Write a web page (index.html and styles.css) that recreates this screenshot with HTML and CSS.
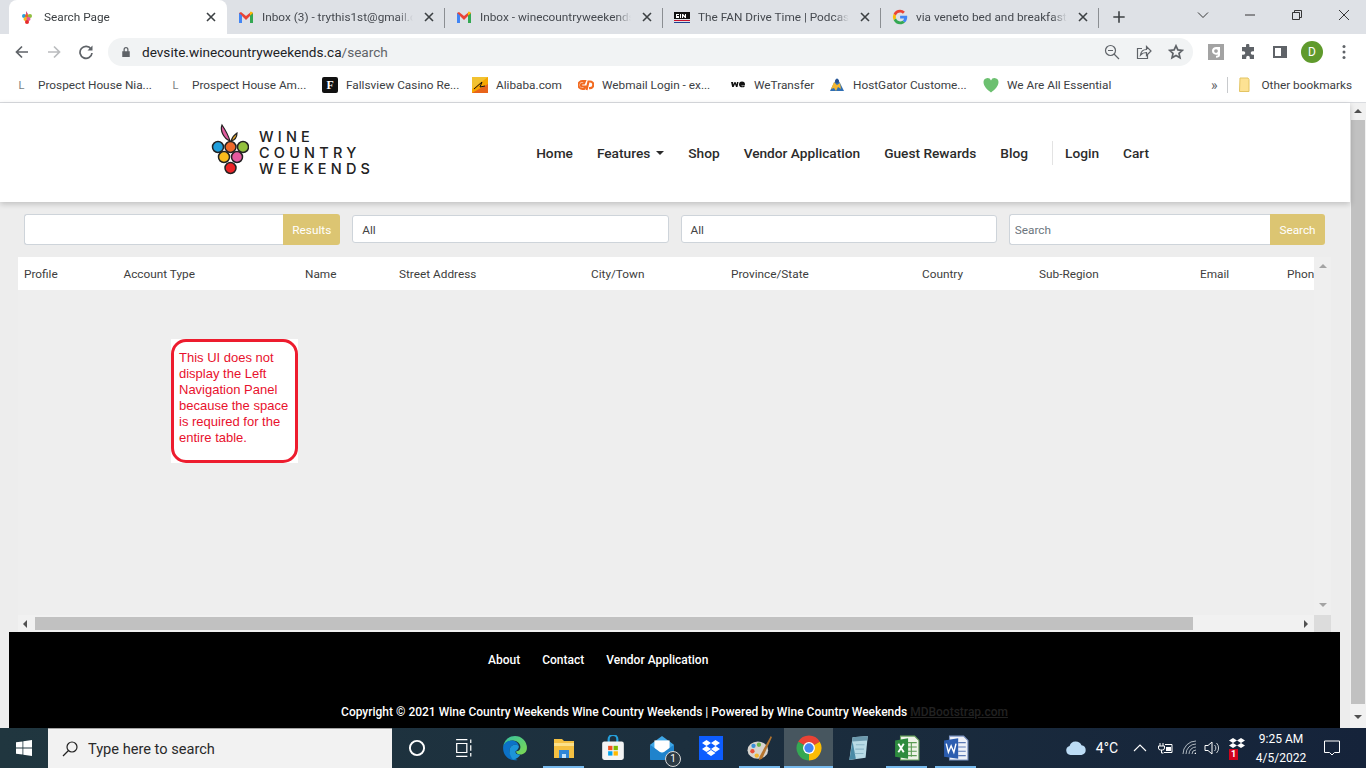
FILE: index.html
```html
<!DOCTYPE html>
<html lang="en">
<head>
<meta charset="utf-8">
<title>Search Page</title>
<link rel="stylesheet" href="styles.css">
</head>
<body>
<div class="screen">
  <div class="tabstrip">
    <div class="tab active">
      <svg class="fav" viewBox="0 0 16 16"><path d="M7 2l2 3-2 1z" fill="#d6457f"/><circle cx="5" cy="7" r="2" fill="#2b9fd8"/><circle cx="8" cy="7" r="2" fill="#e8622c"/><circle cx="11" cy="7" r="2" fill="#8fbf3f"/><circle cx="6.500" cy="10" r="2" fill="#f5b81f"/><circle cx="9.500" cy="10" r="2" fill="#e0569b"/><circle cx="8" cy="13" r="2" fill="#e62b2b"/></svg>
      <span class="tab-title">Search Page</span>
      <svg class="close" viewBox="0 0 16 16"><path d="M4 4l8 8M12 4l-8 8"/></svg>
    </div>
    <div class="tab">
      <svg class="fav" viewBox="0 0 16 16"><path d="M1 14V4l2-1 5 4 5-4 2 1v10h-3V7L8 11 4 7v7z" fill="#ea4335"/><path d="M1 14V4l3 2.500V14z" fill="#4285f4"/><path d="M12 14V6.500L15 4v10z" fill="#34a853"/><path d="M12 6.500V3l1-.5 2 1.500-3 2.500z" fill="#fbbc04"/></svg>
      <span class="tab-title">Inbox (3) - trythis1st@gmail.com</span>
      <svg class="close" viewBox="0 0 16 16"><path d="M4 4l8 8M12 4l-8 8"/></svg>
    </div>
    <div class="tab">
      <svg class="fav" viewBox="0 0 16 16"><path d="M1 14V4l2-1 5 4 5-4 2 1v10h-3V7L8 11 4 7v7z" fill="#ea4335"/><path d="M1 14V4l3 2.500V14z" fill="#4285f4"/><path d="M12 14V6.500L15 4v10z" fill="#34a853"/><path d="M12 6.500V3l1-.5 2 1.500-3 2.500z" fill="#fbbc04"/></svg>
      <span class="tab-title">Inbox - winecountryweekends</span>
      <svg class="close" viewBox="0 0 16 16"><path d="M4 4l8 8M12 4l-8 8"/></svg>
    </div>
    <div class="tab">
      <svg class="fav" viewBox="0 0 16 16"><rect x="0" y="3" width="16" height="7" fill="#111"/><path d="M0 11h16v1H0z" fill="#c8102e"/><path d="M0 13h16v1H0z" fill="#1d3f8f"/><path d="M2 5h3v1H3v1h2v2H2M6 5h1v4H6zM8 5h1l2 2V5h1v4h-1L9 7v2H8z" fill="#fff"/></svg>
      <span class="tab-title">The FAN Drive Time | Podcasts</span>
      <svg class="close" viewBox="0 0 16 16"><path d="M4 4l8 8M12 4l-8 8"/></svg>
    </div>
    <div class="tab">
      <svg class="fav" viewBox="0 0 16 16"><path d="M15.200 8.200c0-.6 0-1-.1-1.500H8.100v2.800h4a3.400 3.400 0 0 1-1.500 2.200l2.300 1.800c1.400-1.300 2.300-3.200 2.300-5.300z" fill="#4285f4"/><path d="M8.100 15.300c2 0 3.600-.6 4.800-1.800l-2.300-1.800c-.6.400-1.500.7-2.500.7-1.900 0-3.600-1.300-4.100-3.100L1.600 11.100a7.200 7.200 0 0 0 6.500 4.200z" fill="#34a853"/><path d="M4 9.300a4.300 4.300 0 0 1 0-2.700L1.600 4.800a7.200 7.200 0 0 0 0 6.300z" fill="#fbbc04"/><path d="M8.100 3.600c1.100 0 2 .4 2.800 1.100l2-2A7 7 0 0 0 8.100.8a7.200 7.200 0 0 0-6.500 4l2.400 1.800c.5-1.700 2.200-3 4.100-3z" fill="#ea4335"/></svg>
      <span class="tab-title">via veneto bed and breakfast</span>
      <svg class="close" viewBox="0 0 16 16"><path d="M4 4l8 8M12 4l-8 8"/></svg>
    </div>
    <svg class="newtab" viewBox="0 0 16 16"><path d="M8 1.500v13M1.500 8h13"/></svg>
    <div class="winctl">
      <svg viewBox="0 0 12 12"><path d="M1 3.500l5 5 5-5"/></svg>
      <svg viewBox="0 0 12 12"><path d="M1 6h10"/></svg>
      <svg viewBox="0 0 12 12"><path d="M1.500 3.500h7v7h-7zM3.500 3.500v-2h7v7h-2"/></svg>
      <svg viewBox="0 0 12 12"><path d="M1 1l10 10M11 1L1 11"/></svg>
    </div>
  </div>

  <div class="toolbar">
    <svg class="tool" viewBox="0 0 16 16"><path class="ink" d="M14 8H2.500M8 2.500L2.500 8 8 13.500"/></svg>
    <svg class="tool" viewBox="0 0 16 16"><path class="ink off" d="M2 8h11.500M8 2.500L13.500 8 8 13.500"/></svg>
    <svg class="tool" viewBox="0 0 16 16"><path class="ink" d="M13 5a6 6 0 1 0 1 4"/><path class="solid" d="M14.500 1.500v5h-5z"/></svg>
    <div class="omnibox">
      <svg class="lock" viewBox="0 0 12 14"><path d="M3 6V4a3 3 0 0 1 6 0v2h1.500v7h-9V6zm1.500 0h3V4a1.500 1.500 0 0 0-3 0z"/></svg>
      <span class="url">devsite.winecountryweekends.ca<span class="url-path">/search</span></span>
      <svg class="omni-icon" viewBox="0 0 16 16"><circle class="thin" cx="6.500" cy="6.500" r="5"/><path class="thin" d="M10 10l5 5M4 6.500h5"/></svg>
      <svg class="omni-icon" viewBox="0 0 16 16"><path class="thin" d="M6 4.500H1.500v10h10V11"/><path class="thin" d="M4.500 11c.5-3.500 3-5.500 6-5.500V2.500L15 7l-4.500 4.500V8.500c-2.500 0-4.500.8-6 2.500z"/></svg>
      <svg class="omni-icon" viewBox="0 0 16 16"><path class="thick" d="M8 1.800l1.900 4.100 4.500.5-3.400 3 1 4.400L8 11.500l-4 2.300 1-4.400-3.400-3 4.500-.5z"/></svg>
    </div>
    <div class="ext-group">
      <svg class="ext" viewBox="0 0 18 18"><rect width="18" height="18" fill="#a3a3a3"/><path d="M13.500 3.500v9c0 2-1.500 3-4.500 3v-2c1 0 2-.3 2-1v-.8c-3.500 1-6.500-.5-6.500-4 0-3.500 3-5 6.500-4.200h2.500zM9 5.800c-1.500 0-2 .8-2 2s.5 2 2 2 2-.8 2-2-.5-2-2-2z" fill="#fff"/></svg>
      <svg class="ext" viewBox="0 0 16 16"><path d="M6 1.500a1.700 1.700 0 0 1 3.400 0V3H14v4.200h-1.500a1.800 1.800 0 0 0 0 3.600H14V15H9.800v-1.500a1.800 1.800 0 0 0-3.600 0V15H2v-4.200h1.500a1.800 1.800 0 0 0 0-3.600H2V3h4z" fill="#5f6368"/></svg>
      <svg class="ext" viewBox="0 0 16 16"><path d="M1 2h14v12H1zm2 2v8h6V4z" fill="#5f6368"/></svg>
      <span class="avatar">D</span>
      <svg class="ext" viewBox="0 0 16 16"><circle cx="8" cy="2.500" r="1.500" fill="#5f6368"/><circle cx="8" cy="8" r="1.500" fill="#5f6368"/><circle cx="8" cy="13.500" r="1.500" fill="#5f6368"/></svg>
    </div>
  </div>

  <div class="bookmarks">
    <div class="bm"><span class="bm-l">L</span><span>Prospect House Nia...</span></div>
    <div class="bm"><span class="bm-l">L</span><span>Prospect House Am...</span></div>
    <div class="bm"><span class="bm-f">F</span><span>Fallsview Casino Re...</span></div>
    <div class="bm"><svg class="bm-ico" viewBox="0 0 16 16"><rect width="16" height="16" fill="#f7a600"/><path d="M0 0h16L0 12z" fill="#f2c230"/><path d="M0 16l16-9v9z" fill="#e8641b"/><path d="M2 12l8-7-2 5 5-1" fill="none" stroke="#111"/></svg><span>Alibaba.com</span></div>
    <div class="bm"><svg class="bm-ico" viewBox="0 0 16 16"><path d="M7 4H4.500a4 4 0 0 0 0 8H6l1.500-2.500H4.500a1.500 1.500 0 0 1 0-3H6zM8.500 13l2-8.500H12a3.300 3.300 0 0 1 0 6.700h-1" fill="none" stroke="#f26b21" stroke-width="2.200"/></svg><span>Webmail Login - ex...</span></div>
    <div class="bm"><svg class="bm-ico" viewBox="0 0 16 16"><path d="M1 5l1.200 5h1.500L5 7l1 3h1.500l1-5H7L6.500 7.500 5.500 5h-1l-1 2.500L3 5z" fill="#111"/><path d="M9 7.500a3 3 0 0 1 6 0l-.3 1h-3.500c.5 1 2 .8 3 .2l.5 1c-2 1.200-5.700.8-5.700-2.200z" fill="#111"/></svg><span>WeTransfer</span></div>
    <div class="bm"><svg class="bm-ico" viewBox="0 0 16 16"><path d="M8 1l3 5 4 8H1l4-8z" fill="#2f6fb5"/><path d="M5 5l3 3 3-2 1 6-3-2-2 4-2-3-3 1z" fill="#f2b632"/><circle cx="8" cy="4" r="2" fill="#264f8c"/></svg><span>HostGator Custome...</span></div>
    <div class="bm"><svg class="bm-ico" viewBox="0 0 16 16"><path d="M8 15.500C4 12.500.5 9 .5 5A3.900 3.900 0 0 1 8 3.500 3.900 3.900 0 0 1 15.500 5c0 4-3.500 7.500-7.500 10.500z" fill="#6cc070"/></svg><span>We Are All Essential</span></div>
    <div class="bm-end">
      <span class="chev">»</span>
      <span class="bm-sep"></span>
      <svg class="bm-folder" viewBox="0 0 16 16"><path d="M1.500 1h8l1 1.500v12h-9.500z" fill="#fde293" stroke="#e3c463" transform="translate(1.500)"/></svg>
      <span>Other bookmarks</span>
    </div>
  </div>

  <div class="viewport">
    <div class="page">
      <header class="site-header">
        <a class="logo">
          <svg class="logo-mark" viewBox="0 0 38 54">
            <path d="M19 18C17 11 13 5 11 2c-2 5 1 13 8 16z" fill="#df5c9e" stroke="#222" stroke-width="1.200"/>
            <path d="M20 18c1-3 3-6 6-8 0 4-2 7-6 8z" fill="#e5a92c" stroke="#222" stroke-width="1.200"/>
            <g stroke="#222" stroke-width="1.500">
              <circle cx="7" cy="24" r="5.500" fill="#1f9fdc"/>
              <circle cx="32" cy="24" r="5.500" fill="#93c13e"/>
              <circle cx="19.500" cy="24" r="5.500" fill="#ee6a2b"/>
              <circle cx="13" cy="34" r="5.500" fill="#f9bb1c"/>
              <circle cx="26" cy="34" r="5.500" fill="#e55a9f"/>
              <circle cx="19.500" cy="45" r="5.500" fill="#ec2427"/>
            </g>
          </svg>
          <span class="logo-text"><span>WINE</span><span>COUNTRY</span><span>WEEKENDS</span></span>
        </a>
        <nav class="site-nav">
          <a>Home</a>
          <a class="has-caret">Features<span class="caret"></span></a>
          <a>Shop</a>
          <a>Vendor Application</a>
          <a>Guest Rewards</a>
          <a>Blog</a>
          <span class="nav-sep"></span>
          <a>Login</a>
          <a>Cart</a>
        </nav>
      </header>

      <main class="content">
        <div class="filters">
          <div class="input-group"><input class="field" type="text" aria-label="Results"><button class="gold-btn wide">Results</button></div>
          <div class="select">All</div>
          <div class="select">All</div>
          <div class="input-group"><input class="field" type="text" placeholder="Search"><button class="gold-btn">Search</button></div>
        </div>

        <div class="table-frame">
          <div class="table-clip">
            <table class="results">
              <thead>
                <tr>
                  <th class="c1">Profile</th><th class="c2">Account Type</th><th class="c3">Name</th><th class="c4">Street Address</th><th class="c5">City/Town</th><th class="c6">Province/State</th><th class="c7">Country</th><th class="c8">Sub-Region</th><th class="c9">Email</th><th class="c10">Phone</th>
                </tr>
              </thead>
            </table>
          </div>
          <div class="vscroll">
            <span class="arrow up"></span>
            <span class="arrow down"></span>
          </div>
          <div class="hscroll">
            <span class="arrow left"></span>
            <span class="hthumb"></span>
            <span class="arrow right"></span>
          </div>
          <div class="corner"></div>
        </div>

        <div class="callout">
          <div class="callout-in">This UI does not display the Left Navigation Panel because the space is required for the entire table.</div>
        </div>
      </main>

      <footer class="site-footer">
        <div class="foot-links"><a>About</a><a>Contact</a><a>Vendor Application</a></div>
        <div class="copyright">Copyright © 2021 Wine Country Weekends Wine Country Weekends | Powered by Wine Country Weekends <a class="mdb">MDBootstrap.com</a></div>
      </footer>
    </div>
    <div class="page-scroll">
      <span class="arrow up dark"></span>
      <span class="vthumb"></span>
      <span class="arrow down dark"></span>
    </div>
  </div>

  <div class="taskbar">
    <div class="tb-start"><svg viewBox="0 0 16 16"><path d="M0 2.300l6.500-.9v6.200H0zM7.300 1.300L16 0v7.600H7.300zM0 8.400h6.500v6.200L0 13.700zM7.300 8.400H16V16l-8.700-1.200z" fill="#fff"/></svg></div>
    <div class="tb-search">
      <svg viewBox="0 0 16 16"><circle cx="10" cy="6" r="5" fill="none" stroke="#222" stroke-width="1.200"/><path d="M6.500 9.500L1 15" stroke="#222" stroke-width="1.300"/></svg>
      <span>Type here to search</span>
    </div>
    <div class="tb-app"><svg class="i18" viewBox="0 0 16 16"><circle cx="8" cy="8" r="6.300" fill="none" stroke="#fff" stroke-width="1.700"/></svg></div>
    <div class="tb-app"><svg class="i18 nudge" viewBox="0 0 16 16"><path d="M1 .5h10M1 15.500h10M1.500 4h9v8h-9zM14 .5v3M14 5.500v5M14 12.500v3" fill="none" stroke="#fff" stroke-width="1.100"/></svg></div>
    <div class="tb-app"><svg class="i26" viewBox="0 0 24 24"><defs><linearGradient id="edgeg" x1="0" y1="0" x2="1" y2="1"><stop offset="0" stop-color="#35c1a2"/><stop offset="1" stop-color="#7fd84f"/></linearGradient></defs><path d="M12 1a11 11 0 0 1 11 11c0 4-3 6-6 6-3 0-4-1.500-4-3 2 0 4-1 4-4 0-3-3-6-7-6-4 0-8 2.500-9 6C2 5 6 1 12 1z" fill="url(#edgeg)"/><path d="M1 12c0-4 4-7 8-7 3 0 6 2 6.500 5-3-2-8-1-8.500 4-.4 4 3 8 7.500 9C8 24.500 1 20 1 12z" fill="#0c72c7"/><path d="M7 14c.5-5 5.500-6 8.500-4 .5 2-1 4-3 5-.5 2 2 3.500 4.500 3-1.500 3-5 5-7 4.500C9 21 6.500 18 7 14z" fill="#1d94d8"/></svg></div>
    <div class="tb-app on"><svg class="i24" viewBox="0 0 24 24"><path d="M2 3h8l2 2h10v17H2z" fill="#f4c042"/><path d="M2 7h20v3H2z" fill="#fbe08a"/><path d="M7 14h10v8H7z" fill="#2f86d6"/><path d="M10 18h4v4h-4z" fill="#bfe1fa"/></svg></div>
    <div class="tb-app"><svg class="i26" viewBox="0 0 24 24"><path d="M8 7V4a4 4 0 0 1 8 0v3" fill="none" stroke="#25a0dc" stroke-width="2"/><rect x="2" y="6" width="20" height="17" rx="2" fill="#f4f4f4"/><rect x="7.500" y="10" width="4" height="4" fill="#f25022"/><rect x="12.500" y="10" width="4" height="4" fill="#7fba00"/><rect x="7.500" y="15" width="4" height="4" fill="#00a4ef"/><rect x="12.500" y="15" width="4" height="4" fill="#ffb900"/></svg></div>
    <div class="tb-app badge-host">
      <svg class="i26" viewBox="0 0 24 24"><path d="M1 9l11-8 11 8v13H1z" fill="#3fa7e6"/><path d="M5 5h14v11H5z" fill="#fff"/><path d="M1 9l11 8 11-8v14H1z" fill="#1f83cc"/></svg>
      <span class="count">1</span>
    </div>
    <div class="tb-app"><svg class="i24" viewBox="0 0 24 24"><rect width="24" height="24" fill="#0d5dff"/><path d="M7.500 4L12 7l-4.500 3L3 7zM16.500 4L21 7l-4.500 3L12 7zM7.500 10L12 13l-4.500 3L3 13zM16.500 10L21 13l-4.500 3L12 13zM7.500 17L12 14l4.500 3L12 20z" fill="#fff"/></svg></div>
    <div class="tb-app on"><svg class="i26" viewBox="0 0 24 24"><ellipse cx="10" cy="14" rx="9.500" ry="8" fill="#d8d5cf"/><circle cx="6" cy="10" r="2" fill="#3a8fd8"/><circle cx="11" cy="9" r="2" fill="#6cb64a"/><circle cx="5" cy="15" r="2" fill="#e8503a"/><circle cx="9" cy="19" r="2" fill="#f2b632"/><path d="M22 1l1 1-9 20-3 1 .5-3z" fill="#b5752f"/></svg></div>
    <div class="tb-app on lit"><svg class="i26" viewBox="0 0 24 24"><path d="M12 12L2.040 6.250A11.500 11.500 0 0 1 21.960 6.250z" fill="#ea4335"/><path d="M12 12L21.960 6.250A11.500 11.500 0 0 1 12 23.500z" fill="#fbbc04"/><path d="M12 12V23.500A11.500 11.500 0 0 1 2.040 6.250z" fill="#34a853"/><circle cx="12" cy="12" r="5.500" fill="#fff"/><circle cx="12" cy="12" r="4.300" fill="#4285f4"/></svg></div>
    <div class="tb-app"><svg class="i26" viewBox="0 0 24 24"><path d="M7 2l14-1-2 20-15 2z" fill="#b9dbe6"/><path d="M7 2l14-1-.5 4-14 1z" fill="#6c99ad"/><path d="M4 23L7 6l3 16z" fill="#4a8aa6"/><path d="M10 9h8M9.500 13h8M9 17h8" stroke="#8db8c8"/></svg></div>
    <div class="tb-app on"><svg class="i26" viewBox="0 0 24 24"><path d="M6 1h13l4 4v18H6z" fill="#eef3e8" stroke="#6aa35e"/><path d="M12 7h9M12 11h9M12 15h9M12 19h9M16 7v13" stroke="#5b9b53"/><path d="M1 5l12-2v19L1 20z" fill="#2d8b3e"/><path d="M4 8l5 8M9 8l-5 8" stroke="#fff" stroke-width="1.700"/></svg></div>
    <div class="tb-app on"><svg class="i26" viewBox="0 0 24 24"><path d="M6 1h13l4 4v18H6z" fill="#eef1f8" stroke="#7d95c4"/><path d="M14 7h7M14 11h7M14 15h7M14 19h7" stroke="#5d7ab5"/><path d="M1 5l13-2v19L1 20z" fill="#2b5db0"/><path d="M3 8l2 8 2.500-6L10 16l2-8" fill="none" stroke="#fff" stroke-width="1.300"/></svg></div>
    <div class="tb-fill"></div>
    <div class="tray">
      <svg class="cloud" viewBox="0 0 24 16"><path d="M6 15.500a5 5 0 0 1-1-9.800A7 7 0 0 1 18 5a5.300 5.300 0 0 1 0 10.500z" fill="#bcdcf5"/></svg>
      <span class="temp">4°C</span>
      <svg class="tray-i" viewBox="0 0 16 16"><path d="M2 11l6-6 6 6" fill="none" stroke="#fff" stroke-width="1.100"/></svg>
      <svg class="tray-i" viewBox="0 0 16 16"><path d="M3 3v3M6 3v3M1.500 6h6v2a2 2 0 0 1-2 2h-2a2 2 0 0 1-2-2zM4.500 10v3h2M8 4.500h7v8H7" fill="none" stroke="#fff"/><path d="M9 7h5v4H9z" fill="#fff"/></svg>
      <svg class="tray-i tight" viewBox="0 0 16 16"><path d="M1 14a13 13 0 0 1 13-13M4 14A10 10 0 0 1 14 4M7 14a7 7 0 0 1 7-7M10 14a4 4 0 0 1 4-4" fill="none" stroke="#aeb7bf"/><path d="M12.500 14a1.500 1.500 0 0 1 1.500-1.500V14z" fill="#fff"/></svg>
      <svg class="tray-i" viewBox="0 0 16 16"><path d="M1 5.500h3L8 2v12l-4-3.500H1z" fill="none" stroke="#fff"/><path d="M10.500 5a4 4 0 0 1 0 6M12.500 3a7 7 0 0 1 0 10" fill="none" stroke="#c9cfd4"/></svg>
      <span class="tray-db">
        <svg viewBox="0 0 16 12"><path d="M4 0l4 2.500L4 5 0 2.500zM12 0l4 2.500L12 5 8 2.500zM4 5l4 2.500L4 10 0 7.500zM12 5l4 2.500L12 10 8 7.500z" fill="#fff"/></svg>
        <span class="db-badge">1</span>
      </span>
      <div class="clock"><span>9:25 AM</span><span>4/5/2022</span></div>
      <svg class="notif" viewBox="0 0 16 16"><path d="M.5 1h15v11.500h-5L8 15l-2.500-2.500h-5z" fill="none" stroke="#fff"/></svg>
    </div>
  </div>
</div>
</body>
</html>
```

FILE: styles.css
```css
* { box-sizing: border-box; }
html, body { margin: 0; padding: 0; width: 1366px; height: 768px; overflow: hidden; }
body { font-family: Roboto, "Liberation Sans", sans-serif; font-size: 12px; color: #3c4043; }
.screen { width: 1366px; height: 768px; display: flex; flex-direction: column; background: #fff; }

/* tab strip */
.tabstrip { height: 34px; flex: none; background: #dee1e6; display: flex; align-items: stretch; padding-left: 9px; position: relative; }
.tab { width: 218px; height: 34px; display: flex; align-items: center; gap: 8px; padding: 0 8px 0 11px; position: relative; color: #45494f; }
.tab::after { content: ""; position: absolute; right: 0; top: 8px; height: 20px; width: 1px; background: #8b8e92; }
.tab.active { background: #fff; border-radius: 8px 8px 0 0; color: #3c4043; padding-left: 10px; gap: 9px; }
.tab.active::after { display: none; }
.fav { width: 16px; height: 16px; flex: none; }
.tab-title { flex: 1; min-width: 0; white-space: nowrap; overflow: hidden; font-size: 11.800px; -webkit-mask-image: linear-gradient(90deg, #000 90%, transparent 100%); mask-image: linear-gradient(90deg, #000 90%, transparent 100%); }
.close { width: 16px; height: 16px; flex: none; fill: none; stroke: #3c4043; stroke-width: 1.600; }
.newtab { width: 14px; height: 14px; margin: 10px 0 0 13px; fill: none; stroke: #3c4043; stroke-width: 1.800; }
.winctl { margin-left: auto; display: flex; gap: 35px; padding: 9px 16px 0 0; }
.winctl svg { width: 12px; height: 12px; fill: none; stroke: #222; stroke-width: .9; }

/* toolbar */
.toolbar { height: 34px; flex: none; background: #fff; display: flex; align-items: center; padding: 2px 0 0 14px; }
.tool { width: 16px; height: 16px; margin-right: 16px; flex: none; }
.ink { fill: none; stroke: #5f6368; stroke-width: 1.700; }
.ink.off { stroke: #babcbe; }
.solid { fill: #5f6368; }
.omnibox { width: 1085px; height: 28px; margin-left: -2px; background: #f1f3f4; border-radius: 14px; display: flex; align-items: center; padding-left: 13px; flex: none; }
.lock { width: 10px; height: 12px; fill: #5f6368; flex: none; }
.url { margin-left: 11px; font-size: 13.600px; color: #202124; flex: 1; white-space: nowrap; }
.url-path { color: #5f6368; }
.omni-icon { width: 16px; height: 16px; margin-right: 16px; flex: none; fill: none; }
.omni-icon:last-child { margin-right: 9px; }
.thin { fill: none; stroke: #5f6368; stroke-width: 1.200; }
.thick { fill: none; stroke: #5f6368; stroke-width: 1.700; }
.ext-group { display: flex; align-items: center; padding-left: 15px; }
.ext { width: 16px; height: 16px; flex: none; margin-right: 16px; }
.ext-group .avatar { width: 22px; height: 22px; border-radius: 50%; background: #5f9a2c; color: #fff; display: flex; align-items: center; justify-content: center; font-size: 12px; margin: 0 13px 0 -3px; flex: none; }

/* bookmarks */
.bookmarks { height: 35px; flex: none; background: #fff; border-bottom: 1px solid #dadce0; display: grid; grid-template-columns: 154px 155px 150px 106px 152px 99px 154px 190px 1fr; padding-left: 13px; align-items: center; color: #3c4043; font-size: 11.800px; }
.bm { display: flex; align-items: center; gap: 8px; white-space: nowrap; overflow: hidden; }
.bm-l { width: 17px; text-align: center; color: #7a7d81; flex: none; font-size: 11px; }
.bm-f { width: 16px; height: 16px; background: #111; color: #fff; font-family: "Liberation Serif", serif; font-weight: 700; text-align: center; line-height: 16px; flex: none; border-radius: 2px; }
.bm-ico { width: 16px; height: 16px; flex: none; }
.bm-end { display: flex; align-items: center; justify-content: flex-end; padding-right: 14px; white-space: nowrap; }
.chev { font-size: 14px; color: #5f6368; margin-right: 10px; }
.bm-sep { width: 1px; height: 16px; background: #c8cacd; margin-right: 9px; }
.bm-folder { width: 16px; height: 16px; margin-right: 8px; }

/* page */
.viewport { height: 625px; flex: none; display: flex; background: #ededed; }
.page { width: 1350px; flex: none; display: flex; flex-direction: column; }
.site-header { height: 99px; flex: none; background: #fff; box-shadow: 0 2px 6px rgba(0,0,0,.2); display: flex; align-items: center; padding-left: 211px; position: relative; z-index: 1; }
.logo { display: flex; align-items: center; gap: 10px; margin-top: -5px; }
.logo-mark { width: 38px; height: 54px; flex: none; }
.logo-text { display: flex; flex-direction: column; margin-top: 6px; font-family: Inter, sans-serif; font-weight: 500; font-size: 14.500px; line-height: 15.800px; letter-spacing: 4.200px; color: #222; }
.site-nav { display: flex; align-items: center; gap: 24px; margin-left: 162px; font-size: 13.700px; font-weight: 500; color: #2b2b2b; margin-top: 1px; }
.has-caret { display: flex; align-items: center; gap: 6px; }
.caret { width: 0; height: 0; border: 4px solid transparent; border-top-color: #2b2b2b; border-bottom: 0; }
.nav-sep { width: 1px; height: 24px; background: #e3e3e3; margin: 0 -12px 0 0; }

.content { flex: 1; min-height: 0; position: relative; }
.filters { display: grid; grid-template-columns: repeat(4, 1fr); gap: 12px; padding: 12px 25px 0 24px; height: 43px; }
.input-group { display: flex; height: 31px; }
.field { flex: 1; min-width: 0; height: 31px; border: 1px solid #ced4da; border-right: 0; border-radius: 3px 0 0 3px; background: #fff; padding: 0 5px; font: 11.800px Roboto, sans-serif; outline: none; }
.field::placeholder { color: #6c757d; opacity: 1; }
.gold-btn { width: 55px; height: 31px; flex: none; border: 0; border-radius: 0 3px 3px 0; background: #dcc572; color: #fff; font: 11.800px Roboto, sans-serif; padding: 0; }
.gold-btn.wide { width: 57px; }
.select { height: 28px; margin-top: 1px; border: 1px solid #ced4da; border-radius: 3px; background: #fff; padding: 1px 9px 0; display: flex; align-items: center; color: #444; font-size: 11.800px; }

.table-frame { margin: 12px 0 0 18px; width: 1313px; height: 375px; display: grid; grid-template-columns: 1296px 17px; grid-template-rows: 358px 17px; background: #eeeeee; }
.table-clip { overflow: hidden; }
.results { border-collapse: collapse; table-layout: fixed; width: 1340px; background: #fff; }
.results th { height: 33px; padding: 0 0 0 6px; text-align: left; font-weight: 400; font-size: 11.800px; color: #3d3d3d; white-space: nowrap; background: #fff; }
.c1 { width: 99.500px; } .c2 { width: 181.500px; } .c3 { width: 94px; } .c4 { width: 192px; } .c5 { width: 140px; } .c6 { width: 191px; } .c7 { width: 117px; } .c8 { width: 161px; } .c9 { width: 87px; } .c10 { width: 77px; }
.vscroll { background: #efefef; display: flex; flex-direction: column; justify-content: space-between; align-items: center; padding: 7px 0 8px; }
.hscroll { background: #f1f1f1; display: flex; align-items: center; padding: 0 6px 0 5px; }
.hthumb { width: 1158px; height: 13px; margin-left: 8px; background: #c1c1c1; }
.hscroll .right { margin-left: auto; }
.corner { background: #dcdcdc; }
.arrow { width: 0; height: 0; border: 4px solid transparent; display: block; flex: none; }
.up { border-bottom-color: #a3a3a3; border-top: 0; }
.down { border-top-color: #a3a3a3; border-bottom: 0; }
.left { border-right-color: #505050; border-left: 0; }
.right { border-left-color: #505050; border-right: 0; }
.up.dark { border-bottom-color: #505050; }
.down.dark { border-top-color: #505050; }

.callout { position: absolute; left: 171px; top: 137px; width: 127px; height: 124px; background: #fff; }
.callout-in { width: 100%; height: 100%; border: 3px solid #ed1c2e; border-radius: 15px; padding: 8px 5px 0 5px; font: 13px/16px "Liberation Sans", Arial, sans-serif; color: #e8112d; background: #fff; }

.site-footer { height: 96px; flex: none; margin: 0 10px 0 9px; background: #000; color: #fff; font-size: 12px; font-weight: 500; }
.foot-links { display: flex; gap: 22px; padding: 21px 0 0 479px; height: 70px; }
.copyright { text-align: center; line-height: 20px; white-space: nowrap; }
.mdb { color: #222; text-decoration: underline; }

.page-scroll { width: 16px; flex: none; background: #f1f1f1; display: flex; flex-direction: column; align-items: center; padding: 6px 0 6px; }
.vthumb { width: 14px; height: 584px; margin: 7px 0 11px; background: #c1c1c1; }

/* taskbar */
.taskbar { height: 40px; flex: none; display: flex; align-items: center; background: linear-gradient(90deg, #20363f 0%, #1c2f3e 50%, #15233a 100%); color: #fff; }
.tb-start { width: 48px; height: 40px; display: flex; align-items: center; justify-content: center; flex: none; }
.tb-start svg { width: 16px; height: 16px; }
.tb-search { width: 344px; height: 40px; flex: none; background: #f2f2f2; border-top: 1px solid #a5a5a5; display: flex; align-items: center; padding: 1px 0 0 14px; gap: 10px; color: #2a2a2a; font-size: 14.600px; }
.tb-search svg { width: 16px; height: 16px; flex: none; }
.tb-app { width: 49px; height: 40px; flex: none; display: flex; align-items: center; justify-content: center; position: relative; }
.tb-app.on::after { content: ""; position: absolute; left: 4px; right: 4px; bottom: 0; height: 2px; background: #76b9ed; }
.tb-app.lit { background: #47565f; }
.tb-app.lit::after { left: 0; right: 0; }
.i18 { width: 18px; height: 18px; }
.i24 { width: 24px; height: 24px; }
.i26 { width: 26px; height: 26px; }
.nudge { margin-right: 4px; }
.count { position: absolute; right: 5px; bottom: 1px; width: 16px; height: 16px; border-radius: 50%; background: #2c3a44; border: 1px solid #d8d8d8; font-size: 10px; line-height: 14px; text-align: center; color: #fff; }
.tb-fill { flex: 1; }
.tray { display: flex; align-items: center; height: 40px; flex: none; font-size: 13px; }
.cloud { width: 22px; height: 16px; }
.temp { margin: 0 14px 0 9px; font-size: 14px; }
.tray-i { width: 16px; height: 16px; margin-right: 9px; }
.tray-i.tight { margin-right: 6px; }
.tray-db { width: 16px; height: 24px; position: relative; margin-right: 13px; }
.tray-db svg { width: 16px; height: 12px; display: block; margin-top: 2px; }
.db-badge { position: absolute; left: 0; bottom: 0; width: 9px; height: 11px; background: #d0021b; color: #fff; font-size: 9px; font-weight: 700; line-height: 11px; text-align: center; }
.clock { width: 46px; display: flex; flex-direction: column; align-items: center; gap: 2px; padding-top: 2px; font-size: 12px; line-height: 17px; white-space: nowrap; }
.notif { width: 16px; height: 16px; margin: 0 26px 0 20px; }
```
